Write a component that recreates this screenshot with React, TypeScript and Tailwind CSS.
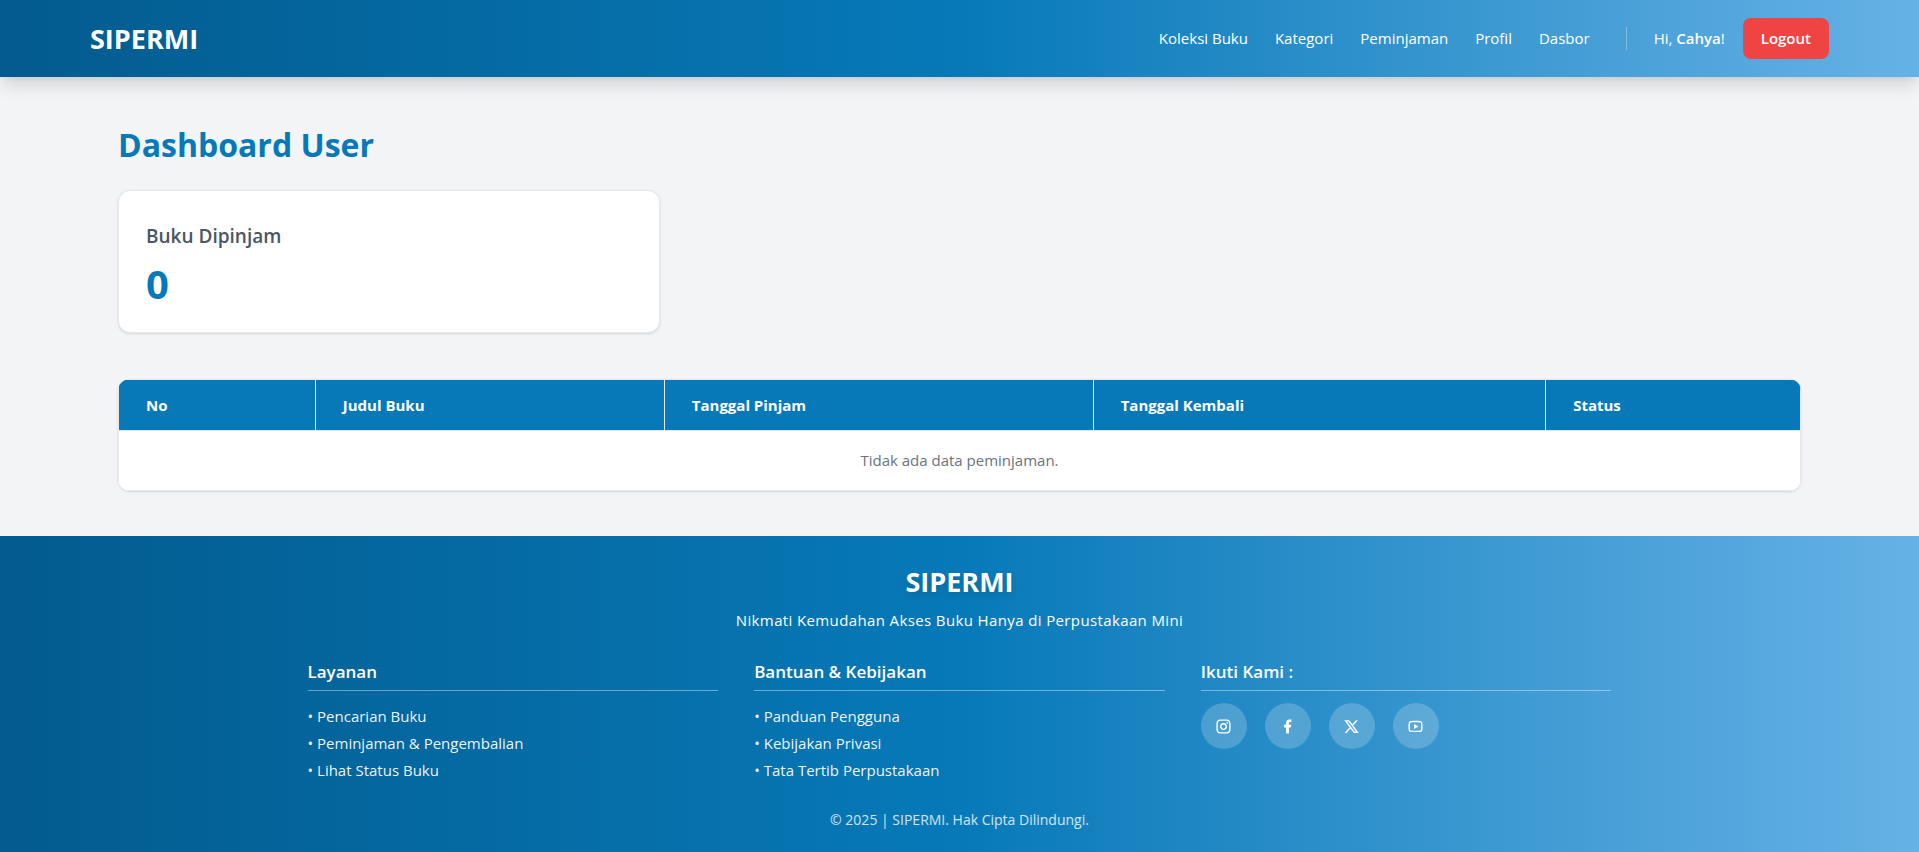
import React from "react";
import { RiInstagramLine, RiFacebookFill, RiTwitterXLine, RiYoutubeLine } from "react-icons/ri";

const navLinks = ["Koleksi Buku", "Kategori", "Peminjaman", "Profil", "Dasbor"];

const columns = [
  { label: "No", width: "w-[11.7%]" },
  { label: "Judul Buku", width: "w-[20.75%]" },
  { label: "Tanggal Pinjam", width: "w-[25.5%]" },
  { label: "Tanggal Kembali", width: "w-[26.9%]" },
  { label: "Status", width: "w-auto" },
];

const footerLists = [
  { title: "Layanan", items: ["Pencarian Buku", "Peminjaman & Pengembalian", "Lihat Status Buku"] },
  { title: "Bantuan & Kebijakan", items: ["Panduan Pengguna", "Kebijakan Privasi", "Tata Tertib Perpustakaan"] },
];

const socials = [
  { label: "Instagram", Icon: RiInstagramLine },
  { label: "Facebook", Icon: RiFacebookFill },
  { label: "X", Icon: RiTwitterXLine },
  { label: "YouTube", Icon: RiYoutubeLine },
];

function Navbar() {
  return (
    <header className="relative flex items-center justify-between bg-linear-to-r/srgb from-[#035b8e] via-[#0779b8] to-[#66b2e6] px-[90px] py-[18px] text-white shadow-[0_11px_17px_-3px_rgba(0,0,0,0.13),0_4px_7px_-4px_rgba(0,0,0,0.1)]">
      <a href="#" className="text-[27px] leading-10 font-bold">SIPERMI</a>
      <nav className="flex items-center text-[15px]">
        <ul className="flex gap-[27px]">
          {navLinks.map((link) => (
            <li key={link}><a href="#">{link}</a></li>
          ))}
        </ul>
        <span className="ml-9 h-[23px] w-px bg-white/30" />
        <span className="ml-[27px]">Hi, <span className="font-semibold">Cahya</span>!</span>
        <button type="button" className="ml-[18px] h-[41px] rounded-lg bg-[#ef4444] px-[18px] font-semibold">Logout</button>
      </nav>
    </header>
  );
}

function Footer() {
  return (
    <footer className="flex grow flex-col items-center bg-linear-to-r/srgb from-[#035b8e] via-[#0779b8] to-[#66b2e6] px-6 pt-[26px] pb-5 text-white">
      <h2 className="text-[27px] leading-10 font-bold text-shadow-[0_4px_6px_rgba(0,0,0,0.12)]">SIPERMI</h2>
      <p className="mt-1 text-[15px] leading-7 tracking-wide">Nikmati Kemudahan Akses Buku Hanya di Perpustakaan Mini</p>
      <div className="mt-6 grid w-full max-w-[1304px] grid-cols-3 gap-9">
        {footerLists.map(({ title, items }) => (
          <section key={title}>
            <h3 className="border-b border-white/40 pb-1 text-[17px] leading-7 font-semibold">{title}</h3>
            <ul className="mt-3 text-[15px] leading-[27px]">
              {items.map((item) => (
                <li key={item}><a href="#" className="text-white/95">• {item}</a></li>
              ))}
            </ul>
          </section>
        ))}
        <section>
          <h3 className="border-b border-white/40 pb-1 text-[17px] leading-7 font-semibold">Ikuti Kami :</h3>
          <div className="mt-3 flex gap-[18px]">
            {socials.map(({ label, Icon }) => (
              <a key={label} href="#" aria-label={label} className="flex size-[46px] items-center justify-center rounded-full bg-white/20">
                <Icon className="size-[17px]" />
              </a>
            ))}
          </div>
        </section>
      </div>
      <p className="mt-6 text-sm leading-6 text-white/80">© 2025 | SIPERMI. Hak Cipta Dilindungi.</p>
    </footer>
  );
}

export default function App() {
  return (
    <div className="flex min-h-screen flex-col bg-[#f3f4f6] font-['Segoe_UI','Open_Sans',sans-serif]">
      <Navbar />
      <main className="px-[118px] py-[45px]">
        <h1 className="text-[32px] leading-[45px] font-bold text-[#0779b8]">Dashboard User</h1>
        <div className="mt-[23px] grid grid-cols-3 gap-7">
          <div className="rounded-xl border border-gray-200 bg-white p-[27px] shadow-sm">
            <h2 className="text-[19px] leading-9 font-semibold text-gray-600">Buku Dipinjam</h2>
            <p className="mt-2 text-[40px] leading-[43px] font-bold text-[#0779b8]">0</p>
          </div>
        </div>
        <div className="mt-[46px] overflow-hidden rounded-xl bg-white shadow-sm">
          <table className="w-full table-fixed border-collapse text-[15px]">
            <thead>
              <tr className="bg-[#0779b8] text-left text-white">
                {columns.map(({ label, width }) => (
                  <th key={label} className={`${width} h-[51px] border border-gray-200 px-[27px] font-bold`}>{label}</th>
                ))}
              </tr>
            </thead>
            <tbody>
              <tr>
                <td colSpan={5} className="h-[60px] border border-gray-200 text-center text-gray-500">Tidak ada data peminjaman.</td>
              </tr>
            </tbody>
          </table>
        </div>
      </main>
      <Footer />
    </div>
  );
}
